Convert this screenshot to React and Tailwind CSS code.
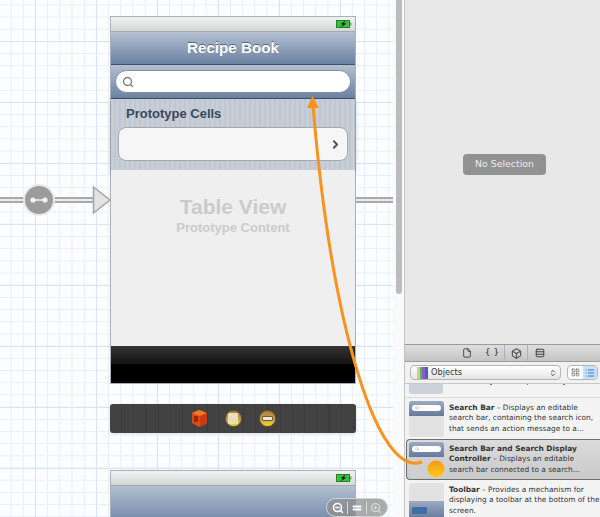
import React from "react";
import { File, Box, ChevronsUpDown, LayoutGrid, List, Rows3, Search, ChevronRight, ZoomIn, ZoomOut, Equal } from "lucide-react";

function Battery() {
  return (
    <svg width="16" height="8" viewBox="0 0 16 8">
      <rect x="0.5" y="0.5" width="13" height="7" fill="#35c43a" stroke="#2a7d2e" />
      <rect x="14" y="2.5" width="1.5" height="3" fill="#8a9a8a" />
      <path d="M9.5 0.5 L4.5 4.2 L7 4.2 L4.5 7.5 L10.5 3.6 L7.8 3.6 Z" fill="#111" />
    </svg>
  );
}

function StatusBar() {
  return (
    <div className="flex h-[15px] items-center justify-end border-b border-[#a3aaae] bg-gradient-to-b from-[#f0f2f0] to-[#d3d8d6] pr-[3px]">
      <Battery />
    </div>
  );
}

function NavTitle({ children }) {
  return (
    <div className="flex h-[33px] items-center justify-center border-b border-[#3f5068] bg-gradient-to-b from-[#b4c0d1] to-[#6b82a1] pt-[1px] text-[15.2px] font-bold text-white [text-shadow:0_-1px_0_#56687f]">
      {children}
    </div>
  );
}

function SearchThumb({ className = "" }) {
  return (
    <div className={"h-[36px] w-[35px] shrink-0 overflow-hidden rounded-[3px] " + className}>
      <div className="flex h-[15px] items-center bg-gradient-to-b from-[#9dabc0] to-[#64799a] px-[3px]">
        <div className="flex h-[6px] w-full items-center rounded-full bg-white pl-[3px]">
          <Search size={4} className="text-[#888]" />
        </div>
      </div>
    </div>
  );
}

function DockBall({ children }) {
  return (
    <div className="flex h-[17px] w-[17px] items-center justify-center rounded-full border border-[#6b5a22] bg-gradient-to-b from-[#a8803c] via-[#c69a50] to-[#efdc00]">
      {children}
    </div>
  );
}

function ObjectRow({ lines, selected, thumb }) {
  return (
    <div
      className={
        selected
          ? "flex h-[41px] items-center gap-[5px] rounded-l-[4px] border border-r-0 border-[#6d6d6d] bg-gradient-to-b from-[#dcdcdc] to-[#c9c9c9] pl-[2px]"
          : "flex h-[41px] items-center gap-[5px] pl-[3px]"
      }
    >
      {thumb}
      <div className="whitespace-nowrap text-[7.4px] leading-[10.4px] text-[#333]">
        {lines.map((line, i) => (
          <div key={i}>{line}</div>
        ))}
      </div>
    </div>
  );
}

export default function App() {
  return (
    <div className="relative flex h-[517px] w-[600px] overflow-hidden bg-white font-['Liberation_Sans',sans-serif]">
      {/* storyboard canvas */}
      <div className="h-full w-[393px] bg-[#fcfdff] bg-[linear-gradient(to_right,#d6e4f6_1px,transparent_1px),linear-gradient(to_bottom,#d6e4f6_1px,transparent_1px),linear-gradient(to_right,#e6eef9_1px,transparent_1px),linear-gradient(to_bottom,#e6eef9_1px,transparent_1px)] pl-[110px] pt-[16px] [background-position:35px_0,0_41px,10.6px_0,0_4.4px] [background-size:61px_61px,61px_61px,12.2px_12.2px,12.2px_12.2px]">
        <div className="h-[368px] w-[246px] border border-[#a9b0ba] bg-[#efefef]">
          <StatusBar />
          <NavTitle>Recipe Book</NavTitle>
          <div className="flex h-[34px] items-center border-b border-[#3f5068] bg-gradient-to-b from-[#b4c0d1] to-[#6b82a1] px-[4px]">
            <div className="flex h-[23px] w-full items-center rounded-full border border-[#7f8ea3] bg-white pl-[6px]">
              <Search size={12} strokeWidth={2.6} className="text-[#7d7d7d]" />
            </div>
          </div>
          <div className="h-[71px] bg-[#c4cbd5] bg-[repeating-linear-gradient(to_right,#c8ced8_0,#c8ced8_3px,#bfc7d2_3px,#bfc7d2_5px)] px-[7px] pt-[7px] shadow-[0_3px_4px_rgba(0,0,0,0.25)]">
            <div className="pl-[8px] text-[13px] font-bold leading-[15px] text-[#3b475c]">Prototype Cells</div>
            <div className="mt-[6px] flex h-[34px] items-center justify-end rounded-[8px] border border-[#a8a8a8] bg-[#f6f6f6] pr-[5px]">
              <ChevronRight size={13} strokeWidth={3.6} className="text-[#555]" />
            </div>
          </div>
          <div className="flex h-[176px] flex-col items-center bg-[#efefef] pt-[24px] font-bold text-[#cbcbcb]">
            <div className="text-[21px] leading-[25px]">Table View</div>
            <div className="text-[13px] leading-[17px]">Prototype Content</div>
          </div>
          <div className="h-[37px] bg-[linear-gradient(to_bottom,#353535,#121212_50%,#000_50%,#000)]" />
        </div>

        <div className="mt-[20px] flex h-[29px] w-[246px] items-center justify-center gap-[17px] rounded-[3px] bg-[#3f3f3f] bg-[repeating-linear-gradient(to_right,#424242_0,#424242_11px,#3c3c3c_11px,#3c3c3c_12.2px)] shadow-[0_1px_2px_1px_#e8e8e8]">
          <svg width="17" height="19" viewBox="0 0 17 19">
            <path d="M8 1 L16 4 L16 14 L8 18 L1 14 L1 4 Z" fill="#dc4b14" />
            <path d="M8 1 L16 4 L9 7 L1 4 Z" fill="#f07a2a" />
            <path d="M9 7 L16 4 L16 14 L9 18 Z" fill="#c93c0c" />
            <rect x="3" y="7" width="4" height="6" fill="#9c2a08" />
          </svg>
          <DockBall>
            <div className="h-[11px] w-[10px] rounded-[1px] bg-[#ecdcc0]" />
          </DockBall>
          <DockBall>
            <div className="h-[5px] w-[11px] rounded-[1px] border border-[#6d5a30] bg-[#efe7d6]" />
          </DockBall>
        </div>

        <div className="mt-[37px] w-[246px] border border-b-0 border-[#a9b0ba]">
          <StatusBar />
          <div className="h-[40px] bg-gradient-to-b from-[#b4c0d1] to-[#6b82a1]" />
        </div>
      </div>

      {/* scroller gutter */}
      <div className="flex h-full w-[12px] border-r border-[#c4c4c4] bg-[#fafafa] pl-[3px]">
        <div className="h-[294px] w-[6px] rounded-b-full bg-[#bcbcbc]" />
      </div>

      {/* utilities panel */}
      <div className="flex h-full min-w-0 flex-1 flex-col">
        <div className="flex h-[344px] justify-center bg-[#e8e8e8] pl-[4px] pt-[154px]">
          <div className="flex h-[21px] w-[83px] items-center justify-center rounded-[4px] bg-[#929292] font-['DejaVu_Sans',sans-serif] text-[9.4px] text-[#ececec]">
            No Selection
          </div>
        </div>
        <div className="flex h-[18px] items-center border-y border-[#9c9c9c] bg-gradient-to-b from-[#dedede] to-[#c4c4c4] pl-[57px] text-[#333]">
          <File size={10} strokeWidth={2} />
          <span className="ml-[8px] w-[24px] text-center font-['DejaVu_Sans',sans-serif] text-[9px]">{"{ }"}</span>
          <div className="flex h-full w-[24px] items-center justify-center border-x border-[#b0b0b0]">
            <Box size={11} strokeWidth={2.5} className="text-[#555]" />
          </div>
          <Rows3 size={10} strokeWidth={2.4} className="ml-[7px] text-[#444]" />
        </div>
        <div className="flex h-[22px] items-center gap-[6px] border-b border-[#c8c8c8] bg-[#f1f1f1] pl-[5px] font-['DejaVu_Sans',sans-serif]">
          <div className="flex h-[15px] w-[151px] items-center rounded-[4px] border border-[#b5b5b5] bg-gradient-to-b from-white to-[#e4e4e4] pl-[6px] pr-[3px] text-[8.2px] text-[#333]">
            <div className="h-[12px] w-[11px] shrink-0 bg-[linear-gradient(to_right,#c9d48a_0_25%,#55b84a_25%_50%,#8a5fc8_50%_75%,#5a55c0_75%)]" />
            <span className="ml-[3px] flex-1">Objects</span>
            <ChevronsUpDown size={8} strokeWidth={2.5} className="text-[#333]" />
          </div>
          <div className="flex h-[15px] w-[31px] rounded-[4px] border border-[#b5b5b5] bg-white">
            <div className="flex flex-1 items-center justify-center text-[#666]">
              <LayoutGrid size={9} />
            </div>
            <div className="flex flex-1 items-center justify-center rounded-r-[3px] bg-[#c6dff7] text-[#2f7fd0]">
              <List size={10} strokeWidth={2.5} />
            </div>
          </div>
        </div>
        <div className="min-h-0 flex-1 overflow-hidden bg-[#f3f3f3] pl-[1px] font-['DejaVu_Sans',sans-serif]">
          <div className="flex h-[10px] items-start pl-[3px]">
            <div className="h-[10px] w-[34px] rounded-b-[3px] bg-[#cdd2d8]" />
            <div className="ml-[47px] h-[1px] w-[2px] bg-[#777]" />
            <div className="ml-[35px] h-[1px] w-[1px] bg-[#777]" />
            <div className="ml-[35px] h-[1px] w-[2px] bg-[#777]" />
          </div>
          <div className="mt-[3px] h-px bg-[#dcdcdc]" />
          <ObjectRow
            thumb={<SearchThumb className="bg-[#e2e2e2]" />}
            lines={[
              <><b>Search Bar</b> – Displays an editable</>,
              "search bar, containing the search icon,",
              "that sends an action message to a...",
            ]}
          />
          <ObjectRow
            selected
            thumb={<SearchThumb className="bg-[#cfcfcf]" />}
            lines={[
              <b>Search Bar and Search Display</b>,
              <><b>Controller</b> – Displays an editable</>,
              "search bar connected to a search...",
            ]}
          />
          <ObjectRow
            thumb={
              <div className="mt-[1px] h-[36px] w-[35px] shrink-0 overflow-hidden rounded-[3px] bg-[#e2e2e2]">
                <div className="mt-[18px] flex h-[18px] items-center bg-gradient-to-b from-[#9dabc0] to-[#64799a] pl-[3px]">
                  <div className="h-[7px] w-[15px] rounded-[1px] bg-[#3f6fa8]" />
                </div>
              </div>
            }
            lines={[
              <><b>Toolbar</b> – Provides a mechanism for</>,
              "displaying a toolbar at the bottom of the",
              "screen.",
            ]}
          />
        </div>
      </div>

      {/* canvas zoom control */}
      <div className="absolute left-[326px] top-[498px] flex h-[19px] w-[62px] items-center justify-around rounded-full border border-[#d2d2d2] bg-[#8f8f8f]/75 px-[3px] text-white">
        <ZoomOut size={12} strokeWidth={3.2} />
        <div className="h-[12px] w-px bg-[#d8d8d8]" />
        <Equal size={12} strokeWidth={4} />
        <div className="h-[12px] w-px bg-[#d8d8d8]" />
        <ZoomIn size={12} strokeWidth={2.5} className="text-[#d8d8d8]" />
      </div>

      {/* segues and the drag curve sit on top of everything */}
      <svg className="pointer-events-none absolute left-0 top-0" width="600" height="517" viewBox="0 0 600 517">
        <defs>
          <linearGradient id="ball" x1="0" y1="0" x2="0" y2="1">
            <stop offset="0" stopColor="#f59a10" />
            <stop offset="1" stopColor="#ffc91e" />
          </linearGradient>
        </defs>
        <path d="M0 200 H94" stroke="#a9a9a9" strokeWidth="6" />
        <path d="M0 200 H94" stroke="#ececec" strokeWidth="2" />
        <path d="M356 200 H393" stroke="#a9a9a9" strokeWidth="6" />
        <path d="M356 200 H393" stroke="#ececec" strokeWidth="2" />
        <path d="M93.5 187 L110 200 L93.5 213 Z" fill="#e2e2e2" stroke="#a5a5a5" strokeWidth="1.5" />
        <circle cx="39" cy="200" r="16" fill="#e9e9e9" />
        <circle cx="39" cy="200" r="14" fill="#9c9c9c" />
        <path d="M33 200 H45" stroke="#f2f2f2" strokeWidth="1.5" />
        <circle cx="33" cy="200" r="2.6" fill="#f2f2f2" />
        <circle cx="45" cy="200" r="2.6" fill="#f2f2f2" />
        <path d="M422 462 C 378 478, 332 330, 313 106" fill="none" stroke="#f7931e" strokeWidth="3" />
        <path d="M312.5 96 L319 108 L307 108 Z" fill="#f7931e" />
        <circle cx="436" cy="469" r="8.5" fill="url(#ball)" />
      </svg>
    </div>
  );
}
